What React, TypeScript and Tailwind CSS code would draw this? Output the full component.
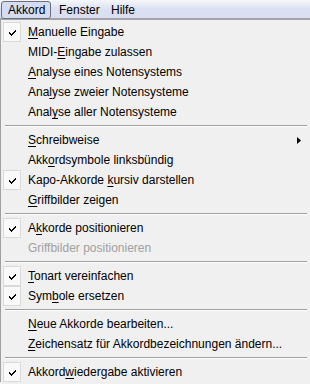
type Item =
  | { sep: true }
  | { sep?: false; label: string; key: number; checked?: boolean; disabled?: boolean; submenu?: boolean }

const items: Item[] = [
  { label: 'Manuelle Eingabe', key: 0, checked: true },
  { label: 'MIDI-Eingabe zulassen', key: 5 },
  { label: 'Analyse eines Notensystems', key: 0 },
  { label: 'Analyse zweier Notensysteme', key: 3 },
  { label: 'Analyse aller Notensysteme', key: 4 },
  { sep: true },
  { label: 'Schreibweise', key: 0, submenu: true },
  { label: 'Akkordsymbole linksbündig', key: 3 },
  { label: 'Kapo-Akkorde kursiv darstellen', key: 13, checked: true },
  { label: 'Griffbilder zeigen', key: 0 },
  { sep: true },
  { label: 'Akkorde positionieren', key: 1, checked: true },
  { label: 'Griffbilder positionieren', key: -1, disabled: true },
  { sep: true },
  { label: 'Tonart vereinfachen', key: 0, checked: true },
  { label: 'Symbole ersetzen', key: 3, checked: true },
  { sep: true },
  { label: 'Neue Akkorde bearbeiten...', key: 0 },
  { label: 'Zeichensatz für Akkordbezeichnungen ändern...', key: 0 },
  { sep: true },
  { label: 'Akkordwiedergabe aktivieren', key: 6, checked: true },
]

function Label({ text, k }: { text: string; k: number }) {
  if (k < 0) return <span>{text}</span>
  return (
    <span>
      {text.slice(0, k)}
      <span className="underline underline-offset-[2px]">{text[k]}</span>
      {text.slice(k + 1)}
    </span>
  )
}

function Check() {
  return (
    <svg width="7" height="7" viewBox="0 0 7 7" className="block">
      <path d="M0 3h1v1h1v1h1v-1h1v-1h1v-1h1v-1h1v2h-1v1h-1v1h-1v1h-1v1h-1v-1h-1v-1h-1z" fill="#000" />
    </svg>
  )
}

export default function App() {
  return (
    <div className="h-[384px] w-[310px] overflow-hidden bg-[#f0f0f0] text-[12px] text-black [font-family:'Liberation_Sans',Arial,sans-serif]">
      <div className="flex h-[20px] items-start border-b-2 border-[#a3a3ab] bg-linear-to-b from-[#f6f7fa] via-[#dbe1f2] to-[#d8def0]">
        <div className="ml-[1px] mt-[1px] flex h-[18px] w-[50px] items-center rounded-[3px] border border-[#6e7078] bg-[#d3dcf2] pl-[6px]">
          Akkord
        </div>
        <div className="mt-[1px] flex h-[18px] w-[53px] items-center pl-[8px]">Fenster</div>
        <div className="mt-[1px] flex h-[18px] items-center pl-[7px]">Hilfe</div>
      </div>
      <div className="border-l border-[#a0a0a0] pt-[2px]">
        {items.map((it, i) =>
          it.sep ? (
            <div key={i} className="flex h-[8px] items-center pl-[4px] pr-[3px]">
              <div className="h-[2px] w-full border-t border-b border-t-[#a0a0a0] border-b-white" />
            </div>
          ) : (
            <div key={i} className="flex h-[20px] items-center">
              <div className="ml-[2px] flex h-[20px] w-[18px] items-center justify-center">
                {it.checked && (
                  <div className="flex h-[20px] w-[18px] items-center justify-center border border-[#dadada] bg-[#f9f9f9]">
                    <Check />
                  </div>
                )}
              </div>
              <div className={`ml-[7px] flex-1 ${it.disabled ? 'text-[#a0a0a0]' : ''}`}>
                <Label text={it.label} k={it.key} />
              </div>
              {it.submenu && (
                <svg width="4" height="7" viewBox="0 0 4 7" className="mr-[9px]">
                  <path d="M0 0L4 3.5L0 7z" fill="#000" />
                </svg>
              )}
            </div>
          ),
        )}
      </div>
    </div>
  )
}
